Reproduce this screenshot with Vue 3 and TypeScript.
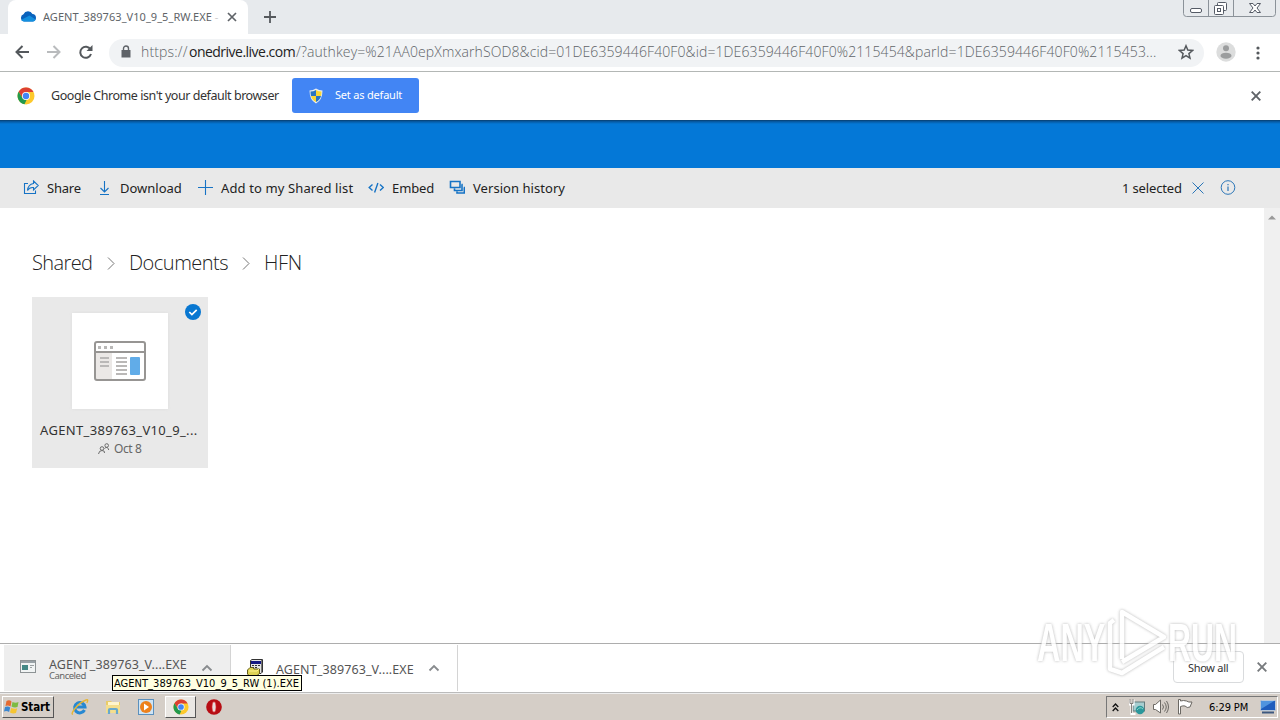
<script setup lang="ts">
interface Command {
  icon: string
  label: string
  cls: string
}

const commands: Command[] = [
  { icon: 'share', label: 'Share', cls: 'c-share' },
  { icon: 'download', label: 'Download', cls: 'c-download' },
  { icon: 'plus', label: 'Add to my Shared list', cls: 'c-add' },
  { icon: 'embed', label: 'Embed', cls: 'c-embed' },
  { icon: 'history', label: 'Version history', cls: 'c-history' },
]

const url = {
  scheme: 'https://',
  host: 'onedrive.live.com',
  path: '/?authkey=%21AA0epXmxarhSOD8&cid=01DE6359446F40F0&id=1DE6359446F40F0%2115454&parId=1DE6359446F40F0%2115453...',
}
</script>

<template>
  <div class="screen">
    <header class="tabs">
      <div class="tab">
        <svg class="cloud" width="16" height="12" viewBox="0 0 16 12">
          <path d="M4 11.500a3.800 3.800 0 0 1-.5-7.300A5 5 0 0 1 12.500 4 3.800 3.800 0 0 1 13 11.500Z" fill="#0a63bd" />
          <path d="M1 10 9.500 5.500 15.500 9.500a3 3 0 0 1-2.500 2H4a4 4 0 0 1-3-1.500Z" fill="#1490df" />
        </svg>
        <span class="tab-title">AGENT_389763_V10_9_5_RW.EXE <i>-</i></span>
        <svg class="tab-close" width="10" height="10" viewBox="0 0 10 10"><path d="m1 1 8 8M9 1 1 9" stroke="#5f6368" stroke-width="1.700" /></svg>
      </div>
      <svg class="new-tab" width="12" height="12" viewBox="0 0 12 12"><path d="M6 0v12M0 6h12" stroke="#55595d" stroke-width="1.800" /></svg>
      <svg class="win-buttons" width="94" height="18" viewBox="0 0 94 18" fill="none">
        <path d="M.5 0v13.500q0 3 3 3h86q3 0 3-3V0M25.500 0v16M50.500 0v16" stroke="#8b9299" />
        <rect x="7.500" y="8.500" width="11" height="4" rx="1.500" fill="#fff" stroke="#555b66" />
        <rect x="34.500" y="2.500" width="9" height="8" rx="1" fill="#fff" stroke="#555b66" />
        <rect x="31.500" y="5.500" width="9" height="9" rx="1" fill="#fff" stroke="#555b66" />
        <rect x="34.500" y="8.500" width="3" height="3" stroke="#555b66" />
        <path d="M66.500 3.500h3.500l2 2.500 2-2.500h3.500L74 8l3.500 4.500H74L72 10l-2 2.500h-3.500L70 8Z" fill="#fff" stroke="#555b66" />
      </svg>
    </header>

    <div class="toolbar">
      <svg class="nav" width="88" height="20" viewBox="0 0 88 20" fill="none" stroke-width="2">
        <path d="M15 10H2.500M8.500 4l-6 6 6 6" stroke="#54585c" />
        <path d="M33 10h12.500M39.500 4l6 6-6 6" stroke="#b9bbbd" />
        <path d="M76.500 7.500A5.500 5.500 0 1 0 77 12" stroke="#54585c" />
        <path d="M78.500 3v6h-6Z" fill="#54585c" />
      </svg>
      <div class="omnibox">
        <svg class="lock" width="10" height="13" viewBox="0 0 10 13"><path d="M.5 5h9v7.500h-9Z" fill="#5f6368" /><path d="M2.500 5.500V3.500a2.500 2.500 0 0 1 5 0v2" fill="none" stroke="#5f6368" stroke-width="1.400" /></svg>
        <div class="url"><span class="u1">{{ url.scheme }}</span><span class="u2">{{ url.host }}</span><span class="u3">{{ url.path }}</span></div>
        <svg class="star" width="16" height="16" viewBox="0 0 16 16"><path d="m8 1.800 1.800 4.300 4.700.4-3.600 3.100 1.100 4.600L8 11.700l-4 2.500 1.100-4.600L1.500 6.500l4.700-.4Z" fill="none" stroke="#55595d" stroke-width="1.500" /></svg>
      </div>
      <svg class="avatar" width="20" height="20" viewBox="0 0 20 20"><circle cx="10" cy="10" r="9.700" fill="#dcdddd" /><circle cx="10" cy="6.300" r="3" fill="#9b9d9e" /><ellipse cx="10" cy="13.700" rx="5.500" ry="3" fill="#9b9d9e" /></svg>
      <svg class="menu" width="4" height="14" viewBox="0 0 4 14" fill="#55595d"><circle cx="2" cy="2" r="1.600" /><circle cx="2" cy="7" r="1.600" /><circle cx="2" cy="12" r="1.600" /></svg>
    </div>

    <div class="infobar">
      <svg class="chrome" width="18" height="18" viewBox="0 0 18 18">
        <circle cx="9" cy="9" r="8.500" fill="#fdc92c" />
        <path d="M1.600 4.800A8.500 8.500 0 0 1 16.500 5H9L5.500 11Z" fill="#dc3f33" />
        <path d="M1.600 4.800 5.500 11l3.500 2 .5 0-2 4.300A8.500 8.500 0 0 1 1.600 4.800Z" fill="#22994d" />
        <circle cx="9" cy="9" r="4" fill="#fff" /><circle cx="9" cy="9" r="3.200" fill="#4285f4" />
      </svg>
      <span class="info-text">Google Chrome isn't your default browser</span>
      <button class="default-btn">
        <svg width="14" height="16" viewBox="0 0 14 16">
          <path d="M7 .5Q10 2.500 13.500 2.500 13.500 12 7 15.500.5 12 .5 2.500 4 2.500 7 .5Z" fill="#e8eef0" />
          <path d="M7 2v6H2Q1.500 6 1.500 3.500 4.500 3.500 7 2Z" fill="#2974c3" /><path d="M7 2v6h5q.5-2 .5-4.500Q9.500 3.500 7 2Z" fill="#f9d636" />
          <path d="M2 8h5v6Q3 12 2 8Z" fill="#f9d636" /><path d="M12 8H7v6q4-2 5-6Z" fill="#2974c3" />
        </svg>
        <span>Set as default</span>
      </button>
      <svg class="info-close" width="10" height="10" viewBox="0 0 10 10"><path d="m.7.7 8.600 8.600M9.300.7.7 9.300" stroke="#5f6368" stroke-width="1.900" /></svg>
    </div>

    <div class="suite"></div>

    <nav class="commands">
      <div v-for="c in commands" :key="c.icon" class="command" :class="c.cls">
        <svg width="16" height="16" viewBox="0 0 16 16" fill="none" stroke="#1673c5" stroke-width="1.100">
          <path v-if="c.icon === 'share'" d="M5 3.500H1.500v10h11v-3M10.500 1 15.300 5.500l-4.800 4.500V7.500Q6.500 7 4.500 10.500q.5-6 6-7Z" />
          <path v-else-if="c.icon === 'download'" d="M8.500 1v11M4.500 8l4 4 4-4M4 14.500h9" />
          <path v-else-if="c.icon === 'plus'" d="M8.500 0v15M1 7.500h15" />
          <path v-else-if="c.icon === 'embed'" d="M4.500 4.500 1.200 7.500l3.300 3M12 4.500l3.300 3-3.300 3M9.900 3 6.600 12.500" stroke-width="1.400" />
          <g v-else stroke-width="1.600"><path d="M1.500 1.500h9.500v6H1.500ZM12.500 4.500h.5v6H5.500V8.500M14.800 7.500h.5v5.500H8V11.500" /></g>
        </svg>
        <span>{{ c.label }}</span>
      </div>
      <div class="selection">
        <span>1 selected</span>
        <svg class="clear" width="12" height="12" viewBox="0 0 12 12"><path d="m.5.5 11 11M11.500.5l-11 11" stroke="#2b76b8" /></svg>
        <svg class="info" width="16" height="16" viewBox="0 0 16 16" fill="none" stroke="#2b76b8"><circle cx="8" cy="7.500" r="6.800" /><path d="M8 6.500V11M8 4v1.300" stroke-width="1.200" /></svg>
      </div>
    </nav>

    <main class="content">
      <div class="page">
        <div class="crumbs">
          <span class="b1">Shared</span>
          <svg width="8" height="13" viewBox="0 0 8 13"><path d="m1 .5 6 6-6 6" fill="none" stroke="#777" /></svg>
          <span class="b2">Documents</span>
          <svg width="8" height="13" viewBox="0 0 8 13"><path d="m1 .5 6 6-6 6" fill="none" stroke="#777" /></svg>
          <span class="b3">HFN</span>
        </div>
        <article class="file">
          <svg class="check" width="16" height="16" viewBox="0 0 16 16"><circle cx="8" cy="8" r="8" fill="#0877d1" /><path d="m4.300 8 2.600 2.600 4.800-4.800" fill="none" stroke="#fff" stroke-width="1.700" /></svg>
          <div class="thumb">
            <svg width="52" height="40" viewBox="0 0 52 40">
              <rect x="1" y="1" width="50" height="38" rx="2" fill="#fff" />
              <path d="M1 11h17v28H1Z" fill="#ebe8e6" />
              <path d="M4 5h3v3H4ZM10 5h3v3h-3ZM16 5h3v3h-3Z" fill="#b9b8b7" />
              <path d="M6 17h9M6 21h9M6 25h9M22 17h11M22 21h11M22 25h11M22 29h11M22 33h11" stroke="#bab8b7" stroke-width="1.800" />
              <rect x="36" y="16" width="10" height="18" rx="1" fill="#61ace8" />
              <path d="M1 11h50" stroke="#979593" stroke-width="2" />
              <rect x="1" y="1" width="50" height="38" rx="2" fill="none" stroke="#979593" stroke-width="2" />
            </svg>
          </div>
          <div class="file-name">AGENT_389763_V10_9_...</div>
          <div class="file-meta">
            <svg width="12" height="12" viewBox="0 0 12 12" fill="none" stroke="#6c6c6c"><circle cx="4" cy="5.500" r="1.800" /><path d="M.5 11q.5-3.500 3.500-3.500T6.500 10M6.500 5.500Q8 4 9 4.500q1.500.5 1.700 2.500" /><circle cx="8.700" cy="2.500" r="1.800" /></svg>
            <span>Oct 8</span>
          </div>
        </article>
      </div>
      <div class="scrollbar"><svg width="8" height="5" viewBox="0 0 8 5"><path d="M0 4.500 4 .5l4 4Z" fill="#999" /></svg></div>
    </main>

    <section class="shelf">
      <div class="dl active">
        <svg class="app-icon" width="16" height="13" viewBox="0 0 16 13"><rect x=".5" y=".5" width="15" height="12" fill="#f1f4f4" stroke="#8d9395" /><path d="M1 1h14v2H1Z" fill="#98a1a6" /><rect x="2" y="5" width="6" height="5" fill="#438886" /><path d="M10 5.500h4M10 7.500h2" stroke="#9ba0a2" /></svg>
        <div class="dl-text"><span class="dl-name">AGENT_389763_V....EXE</span><span class="dl-status">Canceled</span></div>
        <svg class="chev" width="12" height="8" viewBox="0 0 12 8"><path d="m1.500 6.500 4.500-4.500 4.500 4.500" fill="none" stroke="#888b8e" stroke-width="1.800" /></svg>
      </div>
      <div class="dl second">
        <svg class="pkg" width="16" height="17" viewBox="0 0 16 17"><path d="M3.500 1.500 5 .5h10.500v12.500l-1.500 1.500H3.500Z" fill="#e5e6e4" stroke="#333" /><path d="M4 2h10v3H4Z" fill="#161a83" /><path d="M14.500 1v13" stroke="#777" /><path d="M5 6h2v1H5ZM8 6h2v1H8ZM11 6h2v1h-2ZM5 8h2v1H5ZM8 8h2v1H8Z" fill="#333" /><path d="M.5 11 3 8.500h3l1 1.500h5.500v4.500L10 16.500H2L.5 15Z" fill="#ded355" stroke="#655d18" /><path d="M2 12h8l2-2" stroke="#fff28d" fill="none" /></svg>
        <div class="dl-text"><span class="dl-name">AGENT_389763_V....EXE</span></div>
        <svg class="chev" width="12" height="8" viewBox="0 0 12 8"><path d="m1.500 6.500 4.500-4.500 4.500 4.500" fill="none" stroke="#888b8e" stroke-width="1.800" /></svg>
      </div>
      <button class="show-all"><span>Show all</span></button>
      <svg class="shelf-close" width="10" height="10" viewBox="0 0 10 10"><path d="m.7.7 8.600 8.600M9.300.7.7 9.300" stroke="#777a7d" stroke-width="1.900" /></svg>
    </section>

    <footer class="taskbar">
      <div class="start">
        <svg width="17" height="16" viewBox="0 0 16 16"><path d="M3 2q3-1.500 5 .5L7 7.500Q4.500 6 2 7Z" fill="#e56a30" /><path d="M9 3q3 1.500 6 0l-1 5q-3 1-6-.5Z" fill="#7dbb42" /><path d="M1.500 8q3-1 5.200.5L5.600 13Q3 11.500.5 12.500Z" fill="#3a86cf" /><path d="M7.700 9q3 1.500 6 .3l-1.200 4.700q-3 1-6-.5Z" fill="#f5c532" /></svg>
        <b>Start</b>
      </div>
      <svg class="t-ie" width="18" height="18" viewBox="0 0 18 18" fill="none"><path d="M13.500 12A5.200 5.200 0 1 1 14 9H5" stroke="#2688d2" stroke-width="3" /><path d="M2 16Q-.5 16.500 4 10.500T15 2q3-1 .8 3" stroke="#e6b635" stroke-width="1.400" /></svg>
      <svg class="t-folder" width="16" height="16" viewBox="0 0 16 16"><path d="M1 2h5l1 1h8v11H1Z" fill="#e9cc68" /><path d="M3 3h11v3H3Z" fill="#fff5cc" /><path d="M1 6h14v8H1Z" fill="#f4de8d" /><path d="M4 15v-4q0-1 1-1h6q1 0 1 1v4" fill="none" stroke="#68a9cd" stroke-width="2.200" /></svg>
      <svg class="t-media" width="16" height="16" viewBox="0 0 16 16"><rect x=".5" y=".5" width="15" height="15" fill="#cfe4f4" stroke="#5b90bd" /><circle cx="8" cy="8" r="6" fill="#ed811c" /><path d="m6 4.500 5 3.500-5 3.500Z" fill="#fff" /></svg>
      <div class="t-active">
        <svg width="16" height="16" viewBox="0 0 18 18"><circle cx="9" cy="9" r="8.500" fill="#fdc92c" /><path d="M1.600 4.800A8.500 8.500 0 0 1 16.500 5H9L5.500 11Z" fill="#dc3f33" /><path d="M1.600 4.800 5.500 11l4 2-2 4.300A8.500 8.500 0 0 1 1.600 4.800Z" fill="#22994d" /><circle cx="9" cy="9" r="4" fill="#fff" /><circle cx="9" cy="9" r="3.200" fill="#4285f4" /></svg>
      </div>
      <svg class="t-opera" width="16" height="16" viewBox="0 0 16 16"><circle cx="8" cy="8" r="7.800" fill="#b70d13" /><ellipse cx="8" cy="8" rx="2" ry="5.200" fill="#e6dedb" stroke="#e43137" stroke-width=".6" /></svg>
      <div class="tray">
        <svg class="y-up" width="7" height="9" viewBox="0 0 7 9"><path d="m.7 4 2.800-3 2.800 3M.7 8l2.800-3 2.800 3" fill="none" stroke="#111" stroke-width="1.300" /></svg>
        <svg class="y-net" width="16" height="16" viewBox="0 0 16 16"><rect x="4" y="3" width="11.500" height="9" fill="#a7ced0" stroke="#627a7d" /><path d="M.5.5v5h4v-5M2.500 5v10h4" fill="none" stroke="#fff" stroke-width="2.200" /><path d="M1 0v4.500h3V0M2.500 5v9" fill="none" stroke="#69645f" stroke-width=".8" /><circle cx="11" cy="11" r="4.300" fill="#2b979b" /><path d="M8 11q3-4 6-1" stroke="#8bd7ca" fill="none" /></svg>
        <svg class="y-snd" width="16" height="16" viewBox="0 0 16 16" fill="none" stroke="#6b6863"><path d="M.5 5.500h2L7.500 1v13L2.500 10.500h-2Z" fill="#fff" /><path d="M9.500 5.500q2 2.500 0 5M11.500 3.500q3.500 4.500 0 9M13.500 2q4 6 0 12" /></svg>
        <svg class="y-flag" width="16" height="16" viewBox="0 0 16 16"><path d="M1.500.5h2V2q3-1 6 0 2 1.500 5.500 1l-2 5q-3 1.500-5-1-2-.5-4.500.5V15h-2Z" fill="#fff" stroke="#6b6863" /></svg>
        <span class="clock">6:29 PM</span>
        <svg class="y-desk" width="16" height="14" viewBox="0 0 16 14"><rect x=".5" y=".5" width="15" height="10" rx="1" fill="#1e5dbd" stroke="#b9c9da" /><path d="M1 1h13L1 9Z" fill="#4f94df" /><path d="M2 12.500h12" stroke="#3c587f" stroke-width="2" /></svg>
      </div>
    </footer>

    <div class="tooltip"><span>AGENT_389763_V10_9_5_RW (1).EXE</span></div>

    <svg class="watermark" width="216" height="84" viewBox="0 0 216 84">
      <g class="mark-text">
        <text transform="translate(7 62) scale(.6 1)">ANY</text>
        <text transform="translate(138 62) scale(.59 1)">RUN</text>
      </g>
      <path class="mark-fill" d="M92 60V13l42 25-42 25" />
      <path class="mark-fill" d="M84 21l-4 3v46l12 4 42-26" />
    </svg>
  </div>
</template>

<style>
html, body { margin: 0; overflow: hidden; }
</style>

<style scoped>
* { box-sizing: border-box; }
.screen { position: relative; width: 1280px; height: 720px; overflow: hidden; background: #fff; display: flex; flex-direction: column; font-family: "DejaVu Sans Condensed", "DejaVu Sans", sans-serif; font-stretch: condensed; color: #333; white-space: nowrap; }
svg { display: block; flex: none; }
span { display: block; flex: none; }
button { border: 0; margin: 0; padding: 0; font: inherit; }

.tabs { height: 34px; background: #e7eaed; display: flex; align-items: flex-start; padding-left: 8px; flex: none; }
.tab { width: 240px; height: 34px; background: #fff; border-radius: 8px 8px 0 0; display: flex; align-items: center; padding-left: 12px; }
.cloud { margin-top: -2px; }
.tab-title { width: 180px; margin: -1px 0 0 7px; overflow: hidden; font: 11px "Noto Sans", sans-serif; letter-spacing: .05px; color: #606468; }
.tab-title i { color: #ccc; font-style: normal; }
.tab-close { margin-left: 4px; }
.new-tab { margin: 11px 0 0 16px; }
.win-buttons { margin: 0 3px 0 auto; }

.toolbar { height: 38px; border-bottom: 1px solid #b3b7b5; display: flex; align-items: center; flex: none; }
.nav { margin: -2px 0 0 14px; }
.omnibox { margin-left: 7px; width: 1095px; height: 28px; border-radius: 14px; background: #f1f3f5; display: flex; align-items: center; padding-left: 12px; }
.lock { margin-top: -2px; }
.url { display: flex; width: 1035px; margin: -2px 0 0 10px; font: 14px "Open Sans", sans-serif; font-weight: 300; color: #606468; }
.u1 { width: 48px; letter-spacing: .15px; }
.u2 { width: 107px; color: #222; letter-spacing: -.52px; font-weight: 400; }
.u3 { letter-spacing: .11px; }
.star { margin: -1px 0 0 2px; }
.avatar { margin: -1px 0 0 12px; }
.menu { margin-left: 20px; }

.infobar { height: 48px; display: flex; align-items: center; flex: none; padding: 0 0 1px 17px; }
.info-text { width: 241px; margin: -1px 0 0 16px; font: 12.500px "Noto Sans", sans-serif; letter-spacing: -.45px; }
.default-btn { width: 127px; height: 35px; background: #4285f4; border-radius: 3px; color: #fff; display: flex; align-items: center; padding-left: 17px; font: 11px "Noto Sans", sans-serif; }
.default-btn span { margin: -3px 0 0 12px; letter-spacing: -.2px; }
.info-close { margin: 1px 19px 0 auto; }

.suite { height: 48px; background: linear-gradient(#075295, #0478d7 3px); border-top: 1px solid #07467e; flex: none; }
.commands { height: 40px; background: #e9e9e9; display: flex; align-items: center; flex: none; padding-left: 23px; font: 13px "Noto Sans", sans-serif; color: #222; }
.command { display: flex; align-items: center; height: 40px; }
.command span { margin-left: 8px; }
.c-share { width: 73px; letter-spacing: -.2px; }
.c-download { width: 101px; }
.c-add { width: 171px; letter-spacing: .12px; }
.c-embed { width: 81px; letter-spacing: -.1px; }
.c-history { letter-spacing: .05px; }
.selection { display: flex; align-items: center; margin-left: auto; margin-right: 44px; }
.selection span { width: 60px; letter-spacing: -.15px; }
.clear { margin: -1px 0 0 10px; }
.info { margin-left: 16px; }

.content { height: 435px; display: flex; flex: none; }
.page { width: 1264px; padding: 39px 32px 0; }
.scrollbar { width: 16px; background: #f0f0f0; display: flex; justify-content: center; padding-top: 7px; }
.crumbs { display: flex; align-items: center; height: 30px; font: 300 20px "Open Sans", sans-serif; color: #222; }
.crumbs svg { margin-top: 3px; }
.b1 { width: 75px; letter-spacing: -.6px; }
.b2 { width: 99px; margin-left: 14px; letter-spacing: -.5px; }
.b2 + svg { margin-left: 14px; }
.b3 { margin-left: 14px; letter-spacing: -.4px; }
.file { position: relative; width: 176px; height: 171px; margin-top: 20px; background: #e9e9e9; padding-top: 16px; }
.check { position: absolute; left: 153px; top: 7px; }
.thumb { width: 96px; height: 96px; margin: 0 auto; background: #fff; box-shadow: 0 0 3px #ddd; display: flex; align-items: center; justify-content: center; }
.file-name { margin: 11px 0 0 8px; height: 20px; font: 13px/20px "Noto Sans", sans-serif; letter-spacing: .34px; color: #333; }
.file-meta { display: flex; align-items: center; padding-left: 66px; height: 18px; font: 12px "Noto Sans", sans-serif; color: #666; }
.file-meta span { margin: -2px 0 0 4px; letter-spacing: -.4px; }

.shelf { height: 50px; border-top: 1px solid #adadad; display: flex; align-items: flex-start; padding-left: 4px; flex: none; }
.dl { width: 227px; height: 46px; margin-top: 1px; display: flex; border-right: 1px solid #d4d4d4; }
.dl.active { background: #eee; }
.app-icon { margin: 15px 0 0 16px; }
.dl-text { width: 138px; margin: 11px 0 0 13px; }
.dl-name { font: 12.500px/17px "Noto Sans", sans-serif; letter-spacing: .1px; color: #555; }
.dl-status { margin-top: -2px; font: 9.500px/9px "Noto Sans", sans-serif; letter-spacing: -.5px; color: #666; }
.chev { margin: 19px 0 0 14px; }
.second .pkg { margin: 14px 0 0 16px; }
.second .dl-text { margin: 16px 0 0 13px; }
.show-all { width: 71px; height: 32px; margin: 7px 0 0 auto; background: #fff; border: 1px solid #d9dbdd; border-radius: 4px; display: flex; align-items: center; padding-left: 14px; color: #333; font: 11px "Noto Sans", sans-serif; }
.show-all span { letter-spacing: -.3px; }
.shelf-close { margin: 18px 13px 0 13px; }

.taskbar { height: 27px; background: #d5cec7; border-top: 1px solid #eee; box-shadow: 0 -1px 0 #bbb; display: flex; align-items: center; flex: none; }
.start { width: 52px; height: 22px; margin-left: 2px; border: 1px solid #fff; border-right-color: #555; border-bottom-color: #555; display: flex; align-items: center; color: #000; }
.start b { font-size: 11.500px; margin-left: 1px; letter-spacing: -.1px; }
.t-ie { margin-left: 17px; }
.t-folder { margin-left: 16px; }
.t-media { margin-left: 17px; }
.t-active { width: 31px; height: 22px; margin-left: 11px; background: #eae7e3; border: 1px solid #555; border-top-color: #fff; border-left-color: #fff; display: flex; align-items: center; justify-content: center; }
.t-opera { margin-left: 10px; }
.tray { width: 172px; height: 22px; margin: 0 2px 0 auto; border: 1px solid #fff; border-top-color: #777; border-left-color: #777; display: flex; align-items: center; padding-left: 5px; }
.y-net { margin-left: 10px; }
.y-snd { margin-left: 8px; }
.y-flag { margin-left: 8px; }
.clock { width: 42px; margin-left: 16px; font-size: 11px; color: #000; letter-spacing: -.1px; }
.y-desk { margin-left: 9px; }

.tooltip { position: absolute; left: 112px; top: 675px; width: 190px; height: 16px; border: 1px solid #000; background: #ffffe1; color: #000; padding: 1px 0 0 1px; font-size: 11px; line-height: 14px; letter-spacing: .03px; }
.watermark { position: absolute; left: 1030px; top: 599px; opacity: .85; filter: drop-shadow(0 0 1.500px #aaa); }
.mark-text { font: 700 54px "Liberation Sans", sans-serif; fill: #fff; }
.mark-fill { fill: none; stroke: #fff; stroke-width: 4.500px; stroke-linejoin: round; }
</style>
